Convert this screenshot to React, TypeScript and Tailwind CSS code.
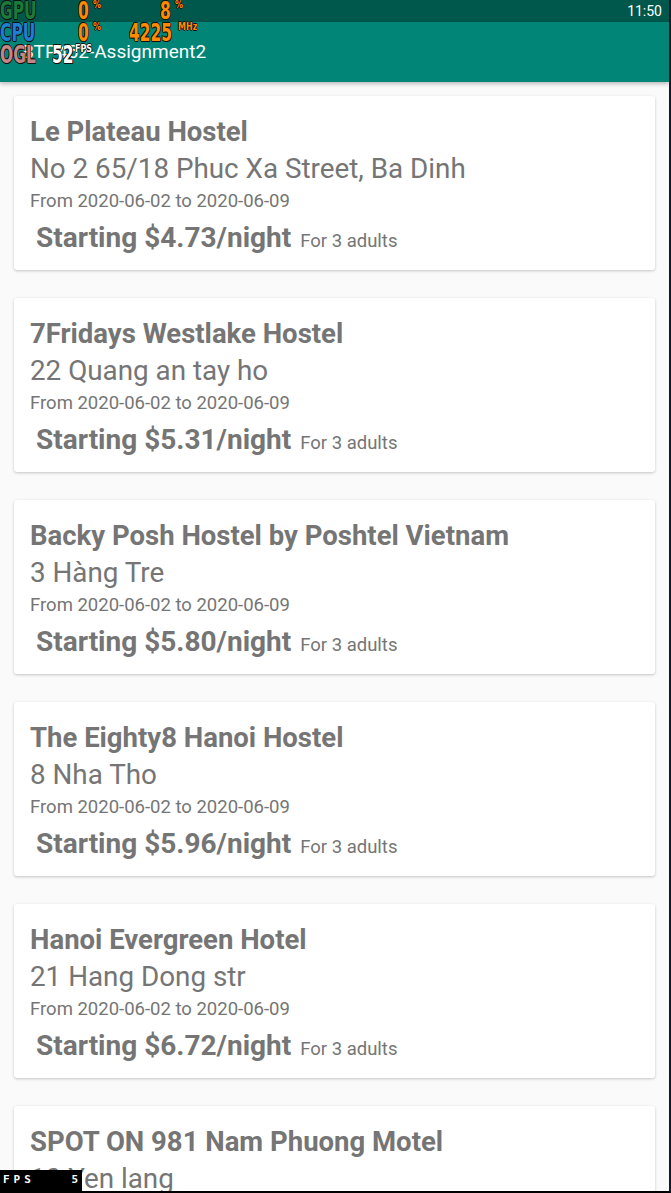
const hostels = [
  { name: "Le Plateau Hostel", address: "No 2 65/18 Phuc Xa Street, Ba Dinh", price: "4.73" },
  { name: "7Fridays Westlake Hostel", address: "22 Quang an tay ho", price: "5.31" },
  { name: "Backy Posh Hostel by Poshtel Vietnam", address: "3 Hàng Tre", price: "5.80" },
  { name: "The Eighty8 Hanoi Hostel", address: "8 Nha Tho", price: "5.96" },
  { name: "Hanoi Evergreen Hotel", address: "21 Hang Dong str", price: "6.72" },
  { name: "SPOT ON 981 Nam Phuong Motel", address: "10 Yen lang", price: "7.10" },
];

function HostelCard({ h }: { h: (typeof hostels)[number] }) {
  return (
    <article className="bg-white rounded-[3px] shadow-[0_1px_3px_rgba(0,0,0,0.22)] pl-[16px] pt-[20px] pb-[16px] shrink-0 text-[#757575]">
      <h2 className="text-[27.5px] leading-[32px] font-bold">{h.name}</h2>
      <p className="mt-[5px] text-[27.8px] leading-[32px]">{h.address}</p>
      <p className="mt-[5px] text-[18.5px] leading-[22px]">From 2020-06-02 to 2020-06-09</p>
      <div className="mt-[10px] ml-[6px] flex items-baseline">
        <span className="text-[28px] leading-[32px] font-bold">Starting ${h.price}/night</span>
        <span className="ml-[9px] text-[18.5px] leading-[22px]">For 3 adults</span>
      </div>
    </article>
  );
}

// outlined, condensed glyphs of the performance overlay
const big =
  "inline-block scale-x-[0.62] origin-left text-[25px] leading-[21px] whitespace-nowrap [text-shadow:_-1px_0_#111,_1px_0_#111,_0_-1px_#111,_0_1px_#111,_1px_1px_#111,_-1px_-1px_#111]";
const small =
  "inline-block scale-x-[0.8] origin-left text-[10px] leading-[10px] whitespace-nowrap [text-shadow:_-1px_0_#111,_1px_0_#111,_0_-1px_#111,_0_1px_#111]";

function PerfOverlay() {
  return (
    <div className="absolute left-0 top-0 z-20 pointer-events-none flex flex-col gap-px font-['DejaVu_Sans',sans-serif] font-bold">
      <div className="flex h-[21px] items-start">
        <span className={`${big} w-[78px] text-[#1b7a3a]`}>GPU</span>
        <span className={`${big} w-[15px] text-[#ff8a00]`}>0</span>
        <span className={`${small} w-[67px] text-[#ff8a00]`}>%</span>
        <span className={`${big} w-[15px] text-[#ff8a00]`}>8</span>
        <span className={`${small} text-[#ff8a00]`}>%</span>
      </div>
      <div className="flex h-[21px] items-start">
        <span className={`${big} w-[78px] text-[#1e7fd0]`}>CPU</span>
        <span className={`${big} w-[15px] text-[#ff8a00]`}>0</span>
        <span className={`${small} w-[36px] text-[#ff8a00]`}>%</span>
        <span className={`${big} w-[49px] text-[#ff8a00]`}>4225</span>
        <span className={`${small} text-[#ff8a00]`}>MHz</span>
      </div>
      <div className="flex h-[21px] items-start">
        <span className={`${big} w-[52px] text-[#c78585]`}>OGL</span>
        <span className={`${big} w-[23px] text-white`}>52</span>
        <span className={`${small} text-white`}>FPS</span>
      </div>
    </div>
  );
}

export default function App() {
  return (
    <div className="w-[671px] h-[1193px] relative overflow-hidden bg-[#fafafa] font-['Roboto',sans-serif] border-r-[2px] border-b-[2px] border-r-[#121a2a] border-b-black">
      {/* status bar */}
      <div className="h-[22px] bg-[#00574b] flex items-center justify-end pr-[7px] text-white text-[14px]">
        11:50
      </div>

      {/* toolbar */}
      <header className="relative z-10 h-[60px] bg-[#008577] flex items-center pl-[22px] text-white text-[19px] shadow-[0_2px_4px_rgba(0,0,0,0.25)]">
        BTP452-Assignment2
      </header>

      {/* list */}
      <main className="flex flex-col gap-[28px] px-[14px] pt-[14px]">
        {hostels.map((h) => (
          <HostelCard key={h.name} h={h} />
        ))}
      </main>

      <PerfOverlay />

      <div className="absolute left-0 bottom-0 z-20 w-[82px] h-[21px] bg-black flex items-center justify-between pl-[3px] pr-[4px] text-white text-[11px] font-bold font-['DejaVu_Sans_Mono',monospace]">
        <span className="tracking-[4px]">FPS</span>
        <span>5</span>
      </div>
    </div>
  );
}
